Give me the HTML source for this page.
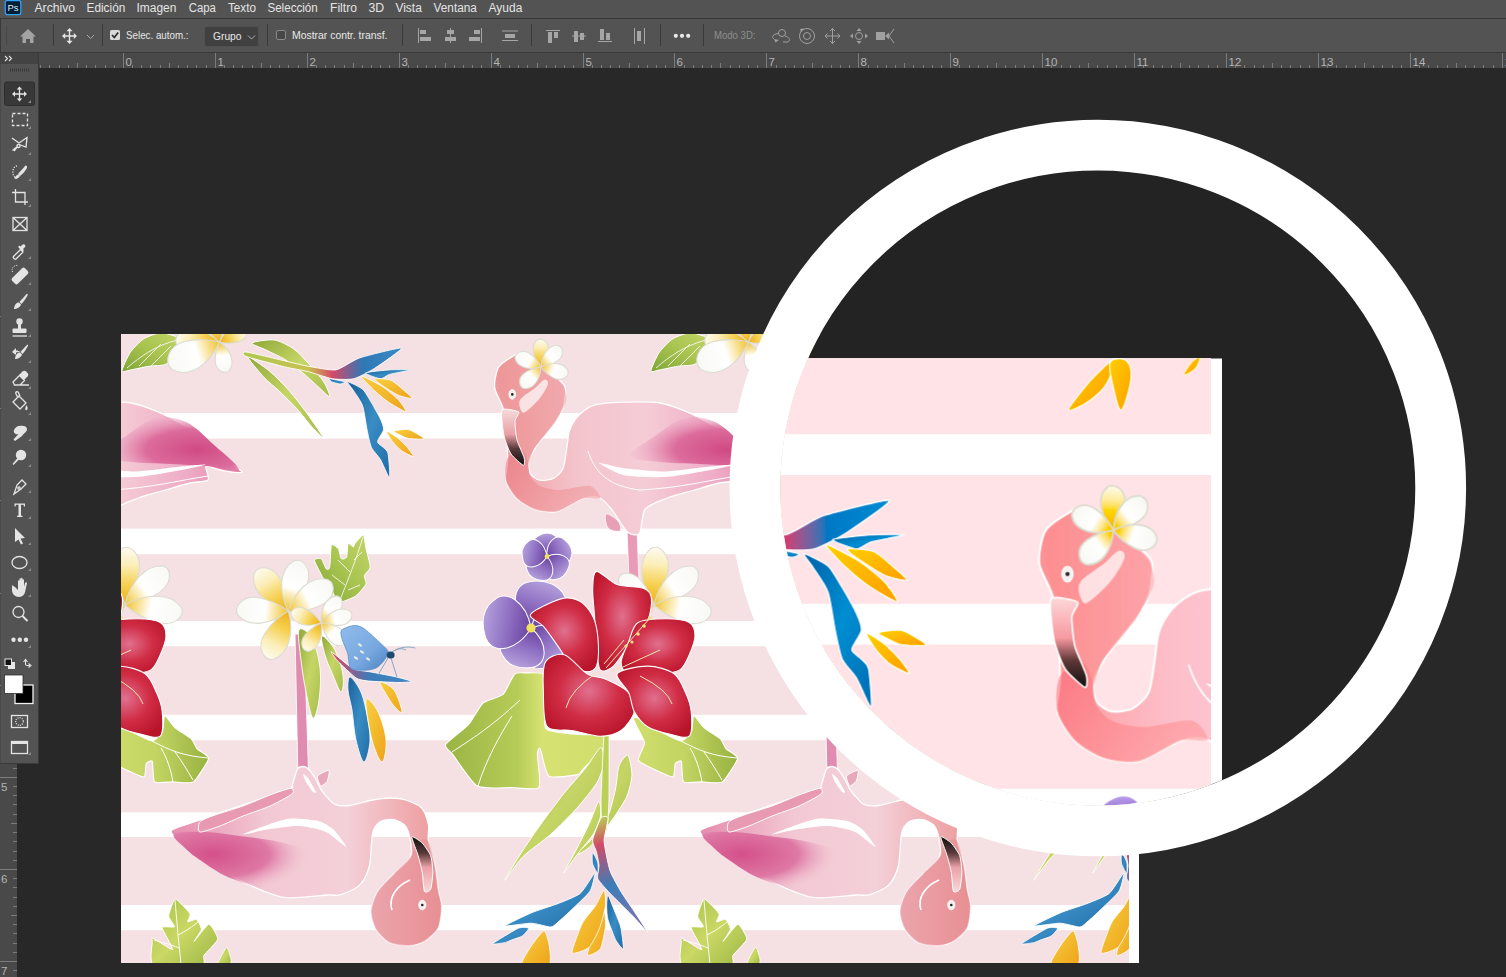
<!DOCTYPE html>
<html><head><meta charset="utf-8">
<style>
*{margin:0;padding:0;box-sizing:border-box}
html,body{width:1506px;height:977px;overflow:hidden;background:#282828;font-family:"Liberation Sans",sans-serif}
.a{position:absolute}
#menu{left:0;top:0;width:1506px;height:18px;background:#535353}
#menu span{position:absolute;top:2px;font-size:12px;color:#e4e4e4;line-height:12px;white-space:nowrap}
#ml{left:0;top:18px;width:1506px;height:1px;background:#383838}
#opt{left:0;top:19px;width:1506px;height:33px;background:#535353}
#ol{left:0;top:52px;width:1506px;height:1px;background:#383838}
#ruler{left:39px;top:53px;width:1467px;height:15px;background:#494949}
#vrul{left:0;top:53px;width:17px;height:924px;background:#494949}
#tools{left:1px;top:64px;width:37px;height:699px;background:#535353}
</style></head><body>
<div id="menu" class="a">
  <svg class="a" style="left:4px;top:0" width="18" height="16" viewBox="0 0 18 16"><rect x="1.2" y="0.6" width="15.6" height="14" rx="2" fill="#001e36" stroke="#31a8ff" stroke-width="1.2"/><text x="3.4" y="11.4" font-family="Liberation Sans" font-size="9.5" fill="#d6ecfc">Ps</text></svg>
  <svg class="a" style="left:0;top:0" width="560" height="18"><g font-family="Liberation Sans" font-size="12" fill="#e4e4e4"><text x="34.5" y="12.2" textLength="40.599999999999994" lengthAdjust="spacingAndGlyphs">Archivo</text><text x="86.5" y="12.2" textLength="38.8" lengthAdjust="spacingAndGlyphs">Edición</text><text x="136.5" y="12.2" textLength="39.8" lengthAdjust="spacingAndGlyphs">Imagen</text><text x="188.8" y="12.2" textLength="27.1" lengthAdjust="spacingAndGlyphs">Capa</text><text x="228.0" y="12.2" textLength="28.0" lengthAdjust="spacingAndGlyphs">Texto</text><text x="267.4" y="12.2" textLength="50.4" lengthAdjust="spacingAndGlyphs">Selección</text><text x="330.0" y="12.2" textLength="26.900000000000002" lengthAdjust="spacingAndGlyphs">Filtro</text><text x="368.5" y="12.2" textLength="15.700000000000001" lengthAdjust="spacingAndGlyphs">3D</text><text x="395.4" y="12.2" textLength="26.5" lengthAdjust="spacingAndGlyphs">Vista</text><text x="433.6" y="12.2" textLength="43.199999999999996" lengthAdjust="spacingAndGlyphs">Ventana</text><text x="488.6" y="12.2" textLength="33.699999999999996" lengthAdjust="spacingAndGlyphs">Ayuda</text></g></svg>
</div>
<div id="ml" class="a"></div>
<div id="opt" class="a"></div>
<div id="ol" class="a"></div>
<div class="a" style="left:0;top:19px;width:1px;height:33px;background:#3a3a3a"></div>
<!-- options bar content -->
<svg class="a" style="left:0;top:19px" width="960" height="33" viewBox="0 19 960 33">
  <g fill="#3c3c3c">
    <rect x="6" y="26" width="1" height="1.2"/><rect x="6" y="28" width="1" height="1.2"/><rect x="6" y="30" width="1" height="1.2"/><rect x="6" y="32" width="1" height="1.2"/><rect x="6" y="34" width="1" height="1.2"/><rect x="6" y="36" width="1" height="1.2"/><rect x="6" y="38" width="1" height="1.2"/><rect x="6" y="40" width="1" height="1.2"/><rect x="6" y="42" width="1" height="1.2"/><rect x="6" y="44" width="1" height="1.2"/>
  </g>
  <path d="M28 29 L36 36.5 H33.5 V43 H30 V39 H26 V43 H22.5 V36.5 H20 Z" fill="#a3a3a3"/>
  <g fill="#3a3a3a">
    <rect x="53" y="24" width="1" height="22"/>
    <rect x="102" y="24" width="1" height="22"/>
    <rect x="267" y="24" width="1" height="22"/>
    <rect x="402" y="24" width="1" height="22"/>
    <rect x="531" y="24" width="1" height="22"/>
    <rect x="660" y="24" width="1" height="22"/>
    <rect x="703" y="24" width="1" height="22"/>
  </g>
  <!-- move icon -->
  <g fill="none" stroke="#e6e6e6" stroke-width="1.4">
    <path d="M69.5 29.5V42.5M63 36H76"/>
  </g>
  <g fill="#e6e6e6">
    <path d="M69.5 28 L72.5 31.2 H66.5Z M69.5 44 L72.5 40.8 H66.5Z M62 36 L65.2 33 V39Z M77 36 L73.8 33 V39Z"/>
  </g>
  <path d="M87 35 L90.5 38.5 L94 35" fill="none" stroke="#a8a8a8" stroke-width="1"/>
  <!-- checkbox checked -->
  <rect x="110" y="30" width="10" height="10" rx="1.5" fill="#d9d9d9"/>
  <path d="M112 35 L114.3 37.5 L118.2 32.5" fill="none" stroke="#2a2a2a" stroke-width="1.7"/>
  <text x="126" y="39.3" font-family="Liberation Sans" font-size="10.2" fill="#e8e8e8" textLength="62.5" lengthAdjust="spacingAndGlyphs">Selec. autom.:</text>
  <rect x="204.5" y="26.5" width="54" height="20" rx="2.5" fill="#404040" stroke="#505050"/>
  <text x="213" y="39.8" font-family="Liberation Sans" font-size="10.5" fill="#e8e8e8" textLength="28.5" lengthAdjust="spacingAndGlyphs">Grupo</text>
  <path d="M248 35.5 L251.5 39 L255 35.5" fill="none" stroke="#b0b0b0" stroke-width="1"/>
  <!-- unchecked -->
  <rect x="276.5" y="30.5" width="9" height="9" rx="1.5" fill="#474747" stroke="#8a8a8a" stroke-width="1"/>
  <text x="292" y="39.3" font-family="Liberation Sans" font-size="10.2" fill="#e8e8e8" textLength="95.5" lengthAdjust="spacingAndGlyphs">Mostrar contr. transf.</text>
  <!-- align icons -->
  <g fill="#a6a6a6">
    <rect x="418" y="28" width="1" height="15"/><rect x="420" y="30" width="6" height="4"/><rect x="420" y="37" width="11" height="4"/>
    <rect x="450" y="28" width="1" height="15"/><rect x="447" y="30" width="7" height="4"/><rect x="445" y="37" width="11" height="4"/>
    <rect x="481" y="28" width="1" height="15"/><rect x="474" y="30" width="6" height="4"/><rect x="469" y="37" width="11" height="4"/>
    <rect x="502" y="30.5" width="16" height="1"/><rect x="505" y="34" width="10" height="4"/><rect x="502" y="40" width="16" height="1"/>
    <rect x="546" y="30" width="14" height="1"/><rect x="548" y="32" width="4" height="11"/><rect x="554" y="32" width="4" height="6"/>
    <rect x="572" y="35.5" width="14" height="1"/><rect x="574" y="31" width="4" height="11"/><rect x="580" y="33" width="4" height="7"/>
    <rect x="598" y="41" width="14" height="1"/><rect x="600" y="29" width="4" height="11"/><rect x="606" y="33" width="4" height="7"/>
    <rect x="634" y="28" width="1" height="16"/><rect x="637" y="31" width="4" height="10"/><rect x="644" y="28" width="1" height="16"/>
  </g>
  <g fill="#e8e8e8"><circle cx="675.8" cy="35.8" r="2.1"/><circle cx="682" cy="35.8" r="2.1"/><circle cx="688.2" cy="35.8" r="2.1"/></g>
  <text x="714" y="39.3" font-family="Liberation Sans" font-size="10.2" fill="#8e8e8e" textLength="41.5" lengthAdjust="spacingAndGlyphs">Modo 3D:</text>
  <g fill="none" stroke="#a0a0a0" stroke-width="1">
    <circle cx="782" cy="33" r="3.5"/>
    <path d="M778.5 33.5 C773 34 771 37 774 39 M785 36 C789 37 791 40 788 42 H783"/>
    <circle cx="807" cy="36" r="7.5"/><circle cx="807" cy="36" r="3.5"/>
    <path d="M832.5 28.5 V43.5 M825 36 H840 M830 31 L832.5 28.5 L835 31 M830 41 L832.5 43.5 L835 41 M827.5 33.5 L825 36 L827.5 38.5 M837.5 33.5 L840 36 L837.5 38.5"/>
    <circle cx="859" cy="36" r="3.5"/>
  </g>
  <g fill="#a0a0a0">
    <path d="M774 39 L779 40 L775.5 42.5Z M800 29 L804 28.5 L801 32Z"/>
    <path d="M859 28 L861.5 31 H856.5Z M859 44 L861.5 41 H856.5Z M850 36 L853 33.5 V38.5Z M868 36 L865 33.5 V38.5Z"/>
    <rect x="876" y="32" width="9" height="8"/><path d="M885 36 L889 32.5 V39.5Z"/>
  </g>
  <path d="M894 29 L889 36 L894 43" fill="none" stroke="#a0a0a0" stroke-width="1"/>
</svg>
<div id="ruler" class="a"></div>
<div id="vrul" class="a"></div>
<svg class="a" style="left:39px;top:53px" width="1467" height="15"><path d="M1.5 12V15M10.5 12V15M20.5 12V15M29.5 12V15M38.5 10V15M47.5 12V15M56.5 12V15M66.5 12V15M75.5 12V15M84.5 0V15M93.5 12V15M102.5 12V15M111.5 12V15M121.5 12V15M130.5 10V15M139.5 12V15M148.5 12V15M157.5 12V15M167.5 12V15M176.5 0V15M185.5 12V15M194.5 12V15M203.5 12V15M213.5 12V15M222.5 10V15M231.5 12V15M240.5 12V15M249.5 12V15M259.5 12V15M268.5 0V15M277.5 12V15M286.5 12V15M295.5 12V15M305.5 12V15M314.5 10V15M323.5 12V15M332.5 12V15M341.5 12V15M350.5 12V15M360.5 0V15M369.5 12V15M378.5 12V15M387.5 12V15M396.5 12V15M406.5 10V15M415.5 12V15M424.5 12V15M433.5 12V15M442.5 12V15M452.5 0V15M461.5 12V15M470.5 12V15M479.5 12V15M488.5 12V15M498.5 10V15M507.5 12V15M516.5 12V15M525.5 12V15M534.5 12V15M544.5 0V15M553.5 12V15M562.5 12V15M571.5 12V15M580.5 12V15M590.5 10V15M599.5 12V15M608.5 12V15M617.5 12V15M626.5 12V15M635.5 0V15M645.5 12V15M654.5 12V15M663.5 12V15M672.5 12V15M681.5 10V15M691.5 12V15M700.5 12V15M709.5 12V15M718.5 12V15M727.5 0V15M737.5 12V15M746.5 12V15M755.5 12V15M764.5 12V15M773.5 10V15M783.5 12V15M792.5 12V15M801.5 12V15M810.5 12V15M819.5 0V15M829.5 12V15M838.5 12V15M847.5 12V15M856.5 12V15M865.5 10V15M874.5 12V15M884.5 12V15M893.5 12V15M902.5 12V15M911.5 0V15M920.5 12V15M930.5 12V15M939.5 12V15M948.5 12V15M957.5 10V15M966.5 12V15M976.5 12V15M985.5 12V15M994.5 12V15M1003.5 0V15M1012.5 12V15M1022.5 12V15M1031.5 12V15M1040.5 12V15M1049.5 10V15M1058.5 12V15M1068.5 12V15M1077.5 12V15M1086.5 12V15M1095.5 0V15M1104.5 12V15M1114.5 12V15M1123.5 12V15M1132.5 12V15M1141.5 10V15M1150.5 12V15M1159.5 12V15M1169.5 12V15M1178.5 12V15M1187.5 0V15M1196.5 12V15M1205.5 12V15M1215.5 12V15M1224.5 12V15M1233.5 10V15M1242.5 12V15M1251.5 12V15M1261.5 12V15M1270.5 12V15M1279.5 0V15M1288.5 12V15M1297.5 12V15M1307.5 12V15M1316.5 12V15M1325.5 10V15M1334.5 12V15M1343.5 12V15M1353.5 12V15M1362.5 12V15M1371.5 0V15M1380.5 12V15M1389.5 12V15M1398.5 12V15M1408.5 12V15M1417.5 10V15M1426.5 12V15M1435.5 12V15M1444.5 12V15M1454.5 12V15M1463.5 0V15" stroke="#7c7c7c" stroke-width="1" fill="none"/><g font-family="Liberation Sans" font-size="11.5" fill="#b4b4b4"><text x="86.5" y="12.6">0</text><text x="178.5" y="12.6">1</text><text x="270.5" y="12.6">2</text><text x="362.5" y="12.6">3</text><text x="454.5" y="12.6">4</text><text x="546.5" y="12.6">5</text><text x="637.5" y="12.6">6</text><text x="729.5" y="12.6">7</text><text x="821.5" y="12.6">8</text><text x="913.5" y="12.6">9</text><text x="1005.5" y="12.6">10</text><text x="1097.5" y="12.6">11</text><text x="1189.5" y="12.6">12</text><text x="1281.5" y="12.6">13</text><text x="1373.5" y="12.6">14</text><text x="1465.5" y="12.6">15</text></g></svg>
<svg class="a" style="left:0;top:53px" width="17" height="924"><path d="M0 263.5H17M13 272.5H17M13 281.5H17M13 291.5H17M13 300.5H17M11 309.5H17M13 318.5H17M13 328.5H17M13 337.5H17M13 346.5H17M0 355.5H17M13 364.5H17M13 374.5H17M13 383.5H17M13 392.5H17M11 401.5H17M13 410.5H17M13 420.5H17M13 429.5H17M13 438.5H17M0 447.5H17M13 457.5H17M13 466.5H17M13 475.5H17M13 484.5H17M11 493.5H17M13 503.5H17M13 512.5H17M13 521.5H17M13 530.5H17M0 540.5H17M13 549.5H17M13 558.5H17M13 567.5H17M13 576.5H17M11 586.5H17M13 595.5H17M13 604.5H17M13 613.5H17M13 622.5H17M0 632.5H17M13 641.5H17M13 650.5H17M13 659.5H17M13 669.5H17M11 678.5H17M13 687.5H17M13 696.5H17M13 705.5H17M13 715.5H17M0 724.5H17M13 733.5H17M13 742.5H17M13 751.5H17M13 761.5H17M11 770.5H17M13 779.5H17M13 788.5H17M13 798.5H17M13 807.5H17M0 816.5H17M13 825.5H17M13 834.5H17M13 844.5H17M13 853.5H17M11 862.5H17M13 871.5H17M13 880.5H17M13 890.5H17M13 899.5H17M0 908.5H17M13 917.5H17" stroke="#7c7c7c" stroke-width="1" fill="none"/><g font-family="Liberation Sans" font-size="11.5" fill="#b4b4b4"><text x="1" y="276.5">0</text><text x="1" y="368.5">1</text><text x="1" y="460.5">2</text><text x="1" y="553.5">3</text><text x="1" y="645.5">4</text><text x="1" y="737.5">5</text><text x="1" y="829.5">6</text><text x="1" y="921.5">7</text></g></svg>
<div id="tools" class="a"></div>
<svg class="a" style="left:0;top:53px" width="40" height="712" viewBox="0 53 40 712">
  <rect x="0" y="53" width="38" height="11" fill="#434343"/>
  <path d="M5 56 L7.5 58.5 L5 61 M9 56 L11.5 58.5 L9 61" fill="none" stroke="#e0e0e0" stroke-width="1.1"/>
  <rect x="38" y="53" width="1" height="16" fill="#3a3a3a"/>
  <g fill="#3a3a3a"><rect x="10" y="68.5" width="1" height="3"/><rect x="12" y="68.5" width="1" height="3"/><rect x="14" y="68.5" width="1" height="3"/><rect x="16" y="68.5" width="1" height="3"/><rect x="18" y="68.5" width="1" height="3"/><rect x="20" y="68.5" width="1" height="3"/><rect x="22" y="68.5" width="1" height="3"/><rect x="24" y="68.5" width="1" height="3"/><rect x="26" y="68.5" width="1" height="3"/><rect x="28" y="68.5" width="1" height="3"/></g>
  <rect x="4.5" y="82" width="30" height="23.5" rx="2" fill="#383838" stroke="#2e2e2e"/>
  <g fill="#8a8a8a"><path d="M31 100 V103 H28Z M31 126 V129 H28Z M31 152 V155 H28Z M31 178 V181 H28Z M31 204 V207 H28Z M31 256 V259 H28Z M31 282 V285 H28Z M31 308 V311 H28Z M31 334 V337 H28Z M31 360 V363 H28Z M31 386 V389 H28Z M31 412 V415 H28Z M31 438 V441 H28Z M31 464 V467 H28Z M31 490 V493 H28Z M31 516 V519 H28Z M31 542 V545 H28Z M31 568 V571 H28Z M31 594 V597 H28Z M31 645 V648 H28Z M31 752 V755 H28Z"/></g>
  <g fill="none" stroke="#e4e4e4" stroke-width="1.3">
    <!-- move -->
    <path d="M19.5 88 V100 M13.5 94 H25.5"/>
    <!-- marquee -->
    <rect x="12.5" y="113.5" width="15" height="12" stroke-dasharray="3 2"/>
    <!-- lasso -->
    <path d="M12 138 L19 143 L27 137.5 L26 147 L19 144.5 M18 146 L14 151 M16 147.5 L12.5 150.5"/>
    <circle cx="18.5" cy="146" r="1.6"/>
    <!-- quick select -->
    <path d="M17 166 C12 166 11 177 17 178" stroke-dasharray="1.2 1.3"/>
    <!-- crop -->
    <path d="M15.5 189 V202 H28 M12 192.5 H25 V205"/>
    <!-- frame -->
    <rect x="13" y="217.5" width="14" height="13"/><path d="M13 217.5 L27 230.5 M27 217.5 L13 230.5"/>
    <!-- eyedropper -->
    <path d="M13.5 256.5 L20.5 249.5 L23 252 L16 259 C15 260 12.5 257.5 13.5 256.5Z"/>
    <path d="M12.5 272 C11 268 14 265 17.5 265.5" stroke-dasharray="1 1.2" stroke-width="1"/>
    <!-- stamp -->
    <path d="M12.5 336 H27"/>
    <!-- eraser -->
    <path d="M13 382 L19.5 375.5 L24.5 380.5 L20 385 H14.5Z M20 385 H29"/>
    <!-- bucket -->
    <path d="M13 402 L19 396 L26 403 L20 409Z M20 396 L18 392 C17 391 15 392 16 394 L18 398"/>
    <!-- pen -->
    <path d="M14 494 L17 485 L22 480 L26 484 L21 489 Z"/>
    <circle cx="19" cy="488" r="1.2"/>
    <!-- path select -->
    <!-- ellipse -->
    <ellipse cx="19.5" cy="562.5" rx="7.5" ry="6"/>
    <!-- zoom -->
    <circle cx="18.5" cy="612" r="5.5"/><path d="M22.5 616 L27.5 621" stroke-width="2"/>
    <!-- quick mask -->
    <rect x="11.5" y="715.5" width="16" height="12"/>
    <circle cx="19.5" cy="721.5" r="3.8" stroke-dasharray="1 1.2"/>
    <!-- screen mode -->
    <rect x="11.5" y="741.5" width="16" height="12"/>
  </g>
  <g fill="#e4e4e4">
    <path d="M19.5 86.5 L22.3 89.5 H16.7Z M19.5 101.5 L22.3 98.5 H16.7Z M12 94 L15 91.2 V96.8Z M27 94 L24 91.2 V96.8Z"/>
    <path d="M25 166 C23 169 20 171 18 174 L20 176 C23 174 25 171 27 168 C27.5 166 26 165 25 166Z M18 174.5 C16 175 15 177 14.5 179 C17 179 19 178 20 176Z"/>
    <path d="M19.5 248.5 L22.5 251.5 L24 250 L23 249 L24.8 247.2 C26.5 245.5 24 243 22.3 244.7 L20.5 246.5 L19.5 245.5 L18 247Z"/>
    <g transform="rotate(-45 20 276)"><rect x="11" y="272" width="18" height="8" rx="2"/></g>
    <path d="M26.5 294 C24 297 21 300 19.5 302 L21.5 304 C23.5 302 25.5 299 27.5 295.5 C28 294 27 293.5 26.5 294Z M19 302.5 C16 302.5 14.5 305 14 309 C17 309 20.5 307 21 304.5Z"/>
    <circle cx="19.5" cy="321.5" r="3.2"/><rect x="18" y="324" width="3" height="5"/><rect x="12.5" y="328.5" width="14" height="4.5" rx="1"/>
    <path d="M27 345 C24 348 22 350 20.5 352 L22.5 354 C24.5 352 26 349 28 346 C28.5 345 27.5 344.5 27 345Z M20 352.5 C17 352.5 15.5 355 15 359 C18 359 21.5 357 22 354.5Z M12 352 L16 348 V350.5 C18 350.5 19 351 20 352 C18 351.7 17 352 16 352.5 V355Z"/>
    <path d="M19 375 L22.5 371.5 C23.5 370.5 25 370.5 26 371.5 L27.5 373 C28.5 374 28.5 375.5 27.5 376.5 L24 380Z"/>
    <path d="M26 405 C26 407 24.5 409 25.5 410 C27 411 28 409 27.5 407Z"/>
    <path d="M19 426 C23 425 27 426 27 429 C27 432 24 433 22 436 L15 441 L13.5 439.5 L18.5 434 C16 435 13 433 14 430 C15 428 17 426 19 426Z"/>
    <circle cx="21" cy="455" r="5.2"/><path d="M17.5 458 L12.5 464 L13.5 465 L19 459.5Z"/>
    <path d="M14.5 503.5 H25 V506.5 H24 L23.5 504.8 H21 V515.5 L22.5 516 V517 H17 V516 L18.5 515.5 V504.8 H16 L15.5 506.5 H14.5Z"/>
    <path d="M15 528 L25 538 L20.5 538.5 L23 543.5 L21 544.5 L18.5 539.5 L15 542Z"/>
    <path d="M13 585 V590 C13 594 16 597 20 597 C24 597 26 594 26.5 590 L28 583 C28 582 26.5 582 26 583 L25 587 V580 C25 579 23.5 579 23.5 580 V586 V578.5 C23.5 577.5 22 577.5 22 578.5 V586 V579 C22 578 20.5 578 20.5 579 V586.5 V581 C20.5 580 19 580 19 581 V590 L16 587 C15 586 13.5 586 13 585Z" transform="translate(-1 -0)"/>
    <circle cx="13.5" cy="639.8" r="2.2"/><circle cx="19.8" cy="639.8" r="2.2"/><circle cx="26" cy="639.8" r="2.2"/>
    <rect x="11.5" y="741.5" width="16" height="2.5"/>
  </g>
  <!-- default colors -->
  <rect x="8" y="662" width="7" height="7" fill="#e8e8e8"/>
  <rect x="5" y="659" width="6.5" height="6.5" fill="#111" stroke="#e8e8e8" stroke-width="1"/>
  <path d="M23.5 662 L25.5 659.5 L27.5 662 M25.5 660 V664 C25.5 665 26 665.5 27 665.5 H30 M28.5 663.5 L31 665.5 L28.5 667.5" fill="none" stroke="#e4e4e4" stroke-width="1.1"/>
  <!-- colors -->
  <rect x="15" y="685" width="18" height="18.5" fill="#000" stroke="#f0f0f0" stroke-width="1.3"/>
  <rect x="4.5" y="675" width="18.5" height="18.5" fill="#ffffff" stroke="#2e2e2e" stroke-width="0.8"/>
  <rect x="38" y="64" width="1" height="700" fill="#3a3a3a"/>
  <rect x="0" y="763" width="39" height="1" fill="#3a3a3a"/>
</svg>
<svg class="a" style="left:0;top:0" width="1506" height="977" viewBox="0 0 1506 977">
<defs>

<linearGradient id="gLeaf" x1="0" y1="0" x2="1" y2="1"><stop offset="0" stop-color="#8fa838"/><stop offset="0.5" stop-color="#c6d666"/><stop offset="1" stop-color="#a4bc48"/></linearGradient>
<linearGradient id="gMon" x1="0" y1="0" x2="0" y2="1"><stop offset="0" stop-color="#a6bf4c"/><stop offset="1" stop-color="#d4e06e"/></linearGradient>
<linearGradient id="gMonH" x1="0" y1="0" x2="1" y2="0"><stop offset="0" stop-color="#9ab443"/><stop offset="0.45" stop-color="#b6cc58"/><stop offset="0.6" stop-color="#d6e272"/><stop offset="1" stop-color="#d0de6c"/></linearGradient>
<linearGradient id="gMonH2" x1="0" y1="0" x2="1" y2="0"><stop offset="0" stop-color="#d0de6c"/><stop offset="0.5" stop-color="#c2d462"/><stop offset="1" stop-color="#98b240"/></linearGradient>
<linearGradient id="gLeafD" x1="0" y1="1" x2="1" y2="0"><stop offset="0" stop-color="#7fa436"/><stop offset="0.5" stop-color="#a8c450"/><stop offset="1" stop-color="#c4d66a"/></linearGradient>
<linearGradient id="gMonB" x1="0" y1="0" x2="1" y2="1"><stop offset="0" stop-color="#a8c24a"/><stop offset="0.5" stop-color="#cad864"/><stop offset="1" stop-color="#9cb644"/></linearGradient>
<linearGradient id="gBlue" x1="0" y1="0" x2="1" y2="1"><stop offset="0" stop-color="#18609a"/><stop offset="0.5" stop-color="#3a8cc4"/><stop offset="1" stop-color="#1f6ca6"/></linearGradient>
<linearGradient id="gOr" x1="0" y1="0" x2="1" y2="1"><stop offset="0" stop-color="#f8d040"/><stop offset="1" stop-color="#eea21a"/></linearGradient>
<linearGradient id="gPet" x1="0" y1="0" x2="1" y2="0"><stop offset="0" stop-color="#eeb018"/><stop offset="0.35" stop-color="#f6d050"/><stop offset="0.7" stop-color="#fbeeb8"/><stop offset="1" stop-color="#fdfbf0"/></linearGradient>
<linearGradient id="gPetW" x1="0" y1="0" x2="1" y2="0"><stop offset="0" stop-color="#f0c030"/><stop offset="0.22" stop-color="#f8e090"/><stop offset="0.45" stop-color="#ffffff"/><stop offset="1" stop-color="#f8f8f4"/></linearGradient>
<linearGradient id="gHib" x1="0" y1="0" x2="1" y2="1"><stop offset="0" stop-color="#d63450"/><stop offset="0.5" stop-color="#e0607e"/><stop offset="1" stop-color="#c41c32"/></linearGradient>
<radialGradient id="gHib2" cx="0.5" cy="0.45" r="0.6"><stop offset="0" stop-color="#e0708e"/><stop offset="0.55" stop-color="#d02c44"/><stop offset="1" stop-color="#b8142a"/></radialGradient>
<linearGradient id="gVio" x1="0" y1="0" x2="1" y2="0"><stop offset="0" stop-color="#6a44a0"/><stop offset="0.45" stop-color="#8c6cc0"/><stop offset="1" stop-color="#b4a0dc"/></linearGradient>
<linearGradient id="gBut" x1="0" y1="0" x2="1" y2="1"><stop offset="0" stop-color="#90bceb"/><stop offset="0.6" stop-color="#78a8e0"/><stop offset="1" stop-color="#4a82c2"/></linearGradient>
<linearGradient id="gBeak" x1="0" y1="0" x2="0" y2="1"><stop offset="0" stop-color="#f6dada"/><stop offset="0.45" stop-color="#eaa0a6"/><stop offset="0.7" stop-color="#5a3a3a"/><stop offset="1" stop-color="#111"/></linearGradient>
<linearGradient id="gBeak2" x1="0" y1="1" x2="0" y2="0"><stop offset="0" stop-color="#f6dada"/><stop offset="0.45" stop-color="#eaa0a6"/><stop offset="0.7" stop-color="#5a3a3a"/><stop offset="1" stop-color="#111"/></linearGradient>
<linearGradient id="gBody1" gradientUnits="userSpaceOnUse" x1="495" y1="0" x2="771" y2="0"><stop offset="0" stop-color="#ee9a9c"/><stop offset="0.3" stop-color="#f4c4cc"/><stop offset="0.55" stop-color="#f5ccd6"/><stop offset="0.8" stop-color="#eeacc6"/><stop offset="1" stop-color="#e282a8"/></linearGradient>
<linearGradient id="gNeck" x1="0" y1="0" x2="1" y2="1"><stop offset="0" stop-color="#e8707a"/><stop offset="1" stop-color="#f2a8a8"/></linearGradient>
<radialGradient id="gWing" cx="0.7" cy="0.6" r="0.75"><stop offset="0" stop-color="#d04a84"/><stop offset="0.5" stop-color="#dc6c9c"/><stop offset="1" stop-color="#eeb0c8" stop-opacity="0"/></radialGradient>
<linearGradient id="gBody2" gradientUnits="userSpaceOnUse" x1="171" y1="0" x2="441" y2="0"><stop offset="0" stop-color="#e68cae"/><stop offset="0.35" stop-color="#f2c8d4"/><stop offset="0.65" stop-color="#f4d0d8"/><stop offset="0.85" stop-color="#f0b0b4"/><stop offset="1" stop-color="#ec9898"/></linearGradient>
<radialGradient id="gWing2" cx="0.3" cy="0.4" r="0.7"><stop offset="0" stop-color="#d4508a"/><stop offset="0.6" stop-color="#de78a4"/><stop offset="1" stop-color="#f0b8cc" stop-opacity="0"/></radialGradient>
<linearGradient id="gStT" gradientUnits="userSpaceOnUse" x1="246" y1="352" x2="402" y2="348"><stop offset="0" stop-color="#b0c850"/><stop offset="0.4" stop-color="#c8c050"/><stop offset="0.55" stop-color="#d64868"/><stop offset="0.75" stop-color="#2e78b6"/><stop offset="1" stop-color="#3a8ac4"/></linearGradient>
<linearGradient id="gStL" gradientUnits="userSpaceOnUse" x1="300" y1="640" x2="424" y2="684"><stop offset="0" stop-color="#b0c850"/><stop offset="0.3" stop-color="#d64868"/><stop offset="0.6" stop-color="#3a7cb8"/><stop offset="1" stop-color="#4a8ac8"/></linearGradient>
<linearGradient id="gStB" gradientUnits="userSpaceOnUse" x1="600" y1="800" x2="648" y2="932"><stop offset="0.12" stop-color="#b8cc55"/><stop offset="0.3" stop-color="#d24a68"/><stop offset="0.6" stop-color="#3a7db8"/><stop offset="1" stop-color="#9070b0"/></linearGradient>

<clipPath id="cv"><rect x="121" y="334" width="1008" height="629"/></clipPath>
<clipPath id="inner"><circle cx="1097.8" cy="488" r="317.5"/></clipPath>
<clipPath id="insclip"><rect x="333" y="259.4" width="269" height="400"/></clipPath>
<g id="P"><path d="M627.0,530.0 L637.0,530.0 L639.0,580.0 L629.0,580.0Z" fill="#e89ab6" stroke="#ffffff" stroke-width="0.8" />
<path d="M252.0,343.0 C253.0,341.6 268.8,339.2 274.4,340.0 C280.0,340.8 289.2,345.8 293.8,349.0 C298.4,352.2 304.8,359.5 308.8,363.9 C312.8,368.3 320.9,377.4 323.7,381.8 C326.5,386.2 330.5,396.2 329.7,396.8 C328.9,397.4 321.3,389.5 317.7,386.3 C314.1,383.1 307.2,376.5 302.8,372.9 C298.4,369.3 289.6,362.4 284.8,359.4 C280.0,356.4 271.3,352.6 266.9,350.4 C262.5,348.2 251.0,344.4 252.0,343.0Z" fill="url(#gLeaf)" stroke="#ffffff" stroke-width="1.0" />
<path d="M247.5,356.4 C248.3,355.6 264.3,366.8 269.9,371.4 C275.5,376.0 284.5,385.4 289.3,390.8 C294.1,396.2 301.8,406.3 305.8,411.7 C309.8,417.1 316.8,427.6 319.2,431.2 C321.6,434.8 324.7,439.2 323.7,438.6 C322.7,438.0 315.3,430.7 311.7,426.7 C308.1,422.7 301.2,413.5 296.8,408.7 C292.4,403.9 283.3,395.0 278.9,390.8 C274.5,386.6 268.1,381.9 263.9,377.3 C259.7,372.7 246.7,357.2 247.5,356.4Z" fill="url(#gLeaf)" stroke="#ffffff" stroke-width="1.0" />
<path d="M329.7,378.8 C331.0,378.8 343.6,381.3 344.6,381.8 C345.6,382.3 341.3,384.0 340.0,384.0 C338.7,384.0 333.0,382.5 332.0,382.0 C331.0,381.5 328.4,378.8 329.7,378.8Z" fill="url(#gBlue)" stroke="#ffffff" stroke-width="0.8" />
<path d="M347.6,381.8 C348.7,381.6 359.8,386.9 362.6,389.3 C365.4,391.8 369.4,399.3 371.5,402.8 C373.6,406.3 379.1,416.1 380.5,419.2 C381.9,422.3 383.9,427.1 383.5,429.7 C383.1,432.3 377.5,439.5 377.5,441.6 C377.5,443.7 382.3,446.2 383.5,447.6 C384.7,449.0 387.3,450.1 388.0,453.6 C388.7,457.1 390.4,476.8 389.5,477.5 C388.6,478.2 382.6,463.1 380.5,459.6 C378.4,456.1 373.1,451.1 371.5,447.6 C369.9,444.1 368.1,434.6 367.1,429.7 C366.1,424.8 364.2,410.2 362.6,405.7 C361.0,401.2 355.4,393.6 353.6,390.8 C351.9,388.0 346.6,382.0 347.6,381.8Z" fill="url(#gBlue)" stroke="#ffffff" stroke-width="0.8" />
<path d="M246.0,352.0 C249.9,352.4 278.7,359.5 284.8,360.9 C290.9,362.3 302.2,365.2 307.3,366.1 C312.4,367.0 330.5,370.7 335.7,369.9 C340.9,369.1 353.0,360.1 359.6,357.9 C366.2,355.7 399.9,347.1 401.4,348.2 C402.9,349.2 379.3,365.3 374.5,368.4 C369.7,371.5 357.8,377.8 353.6,378.8 C349.4,379.8 337.3,379.5 332.7,378.8 C328.1,378.1 312.1,372.6 307.3,371.4 C302.5,370.2 290.9,368.4 284.8,366.9 C278.7,365.4 249.9,357.9 246.0,356.4 C242.1,354.9 242.1,351.6 246.0,352.0Z" fill="url(#gStT)" stroke="#ffffff" stroke-width="0.9" />
<path d="M365.6,372.9 C366.5,372.0 385.0,370.2 389.5,369.9 C394.0,369.6 410.4,369.4 410.4,369.9 C410.4,370.3 392.5,373.5 389.5,374.4 C386.5,375.3 382.9,378.9 380.5,378.8 C378.1,378.7 364.7,373.8 365.6,372.9Z" fill="url(#gBlue)" stroke="#ffffff" stroke-width="0.8" />
<path d="M374.5,378.8 C375.4,378.1 387.5,378.9 391.0,380.3 C394.5,381.7 402.0,388.7 404.4,390.8 C406.8,392.9 412.6,397.8 411.9,398.3 C411.2,398.8 401.7,396.7 398.4,395.3 C395.1,393.9 386.3,388.2 383.5,386.3 C380.7,384.4 373.6,379.5 374.5,378.8Z" fill="url(#gOr)" stroke="#ffffff" stroke-width="0.8" />
<path d="M361.1,375.9 C362.0,375.4 377.6,383.5 382.0,386.3 C386.4,389.1 395.6,396.8 398.4,399.8 C401.2,402.8 406.9,411.3 405.9,411.7 C404.9,412.1 393.2,405.2 389.5,402.8 C385.8,400.4 377.8,393.9 374.5,390.8 C371.2,387.7 360.2,376.4 361.1,375.9Z" fill="url(#gOr)" stroke="#ffffff" stroke-width="0.8" />
<path d="M394.0,431.2 C394.9,430.5 405.4,428.8 408.9,429.7 C412.4,430.6 423.9,437.6 423.9,438.6 C423.9,439.6 411.5,439.0 408.9,438.6 C406.3,438.2 403.1,436.5 401.4,435.6 C399.7,434.7 393.1,431.9 394.0,431.2Z" fill="url(#gOr)" stroke="#ffffff" stroke-width="0.8" />
<path d="M386.5,431.2 C387.2,430.8 396.0,436.7 398.4,438.6 C400.8,440.5 405.6,445.5 407.4,447.6 C409.1,449.7 414.1,456.2 413.4,456.6 C412.7,457.0 403.8,452.4 401.4,450.6 C399.0,448.9 394.2,443.9 392.5,441.6 C390.8,439.3 385.8,431.6 386.5,431.2Z" fill="url(#gOr)" stroke="#ffffff" stroke-width="0.8" />
<path d="M513.0,292.0 C512.3,290.8 518.8,283.0 522.0,279.0 C525.2,275.0 528.8,271.0 532.0,268.0 C535.2,265.0 540.2,259.8 541.0,261.0 C541.8,262.2 539.5,270.8 537.0,275.0 C534.5,279.2 530.0,283.2 526.0,286.0 C522.0,288.8 513.7,293.2 513.0,292.0Z" fill="url(#gOr)" stroke="#ffffff" stroke-width="0.8" />
<path d="M539.0,262.0 C540.3,259.2 546.8,259.3 549.0,261.0 C551.2,262.7 552.5,266.8 552.0,272.0 C551.5,277.2 547.8,291.0 546.0,292.0 C544.2,293.0 542.2,283.0 541.0,278.0 C539.8,273.0 537.7,264.8 539.0,262.0Z" fill="url(#gOr)" stroke="#ffffff" stroke-width="0.8" />
<path d="M585.0,270.0 C584.7,269.3 588.3,263.8 590.0,262.0 C591.7,260.2 594.7,258.3 595.0,259.0 C595.3,259.7 593.7,264.2 592.0,266.0 C590.3,267.8 585.3,270.7 585.0,270.0Z" fill="url(#gOr)" stroke="#ffffff" stroke-width="0.6" />
<path d="M650.9,371.0 C650.9,369.0 656.6,356.3 659.2,352.5 C661.8,348.7 669.3,340.9 673.1,338.6 C676.9,336.3 686.7,332.7 691.5,333.0 C696.3,333.3 713.1,338.7 714.6,341.4 C716.1,344.1 706.4,353.3 704.0,356.0 C701.6,358.7 697.4,363.3 694.3,364.5 C691.2,365.7 681.8,365.7 677.7,366.3 C673.6,366.9 662.3,369.5 659.2,370.0 C656.1,370.5 650.9,373.0 650.9,371.0Z" fill="url(#gLeafD)" stroke="#ffffff" stroke-width="1.0" />
<path d="M656,368 C670,356 684,346 706,340 M668,366 L690,344 M680,366 L700,346" stroke="#ffffff" stroke-width="0.8" fill="none"/>
<g transform="translate(748.5 342.0) rotate(-172.0)"><path d="M0,0 C13.2,-14.0 31.7,-19.6 42.2,-8.4 C46.6,-0.9 39.6,10.3 26.4,9.3 C15.4,8.4 5.3,3.7 0,0Z" fill="url(#gPet)" stroke="#dcdcd2" stroke-width="1.1"/></g><g transform="translate(748.5 342.0) rotate(161.0)"><path d="M0,0 C16.8,-17.9 40.3,-25.0 53.8,-10.7 C59.4,-1.2 50.4,13.1 33.6,11.9 C19.6,10.7 6.7,4.8 0,0Z" fill="url(#gPetW)" stroke="#dcdcd2" stroke-width="1.1"/></g><g transform="translate(748.5 342.0) rotate(83.0)"><path d="M0,0 C9.3,-9.9 22.3,-13.8 29.8,-5.9 C32.9,-0.7 27.9,7.2 18.6,6.6 C10.8,5.9 3.7,2.6 0,0Z" fill="url(#gPetW)" stroke="#dcdcd2" stroke-width="1.1"/></g><g transform="translate(748.5 342.0) rotate(-20.0)"><path d="M0,0 C9.0,-9.6 21.6,-13.4 28.8,-5.7 C31.8,-0.6 27.0,7.0 18.0,6.4 C10.5,5.7 3.6,2.6 0,0Z" fill="url(#gPet)" stroke="#dcdcd2" stroke-width="1.1"/></g><g transform="translate(748.5 342.0) rotate(-100.0)"><path d="M0,0 C9.0,-9.6 21.6,-13.4 28.8,-5.7 C31.8,-0.6 27.0,7.0 18.0,6.4 C10.5,5.7 3.6,2.6 0,0Z" fill="url(#gPet)" stroke="#dcdcd2" stroke-width="1.1"/></g>
<path d="M512.3,356.6 C515.7,354.6 519.8,351.4 524.2,352.9 C528.6,354.4 539.7,363.7 545.0,368.0 C550.3,372.3 561.5,380.8 564.2,384.9 C566.9,389.0 565.1,395.3 564.9,398.4 C564.7,401.5 564.2,405.2 563.0,408.3 C561.8,411.4 557.9,418.4 555.6,421.8 C553.3,425.2 548.6,430.5 545.8,434.1 C543.0,437.7 537.0,444.9 534.7,448.8 C532.4,452.7 529.1,460.2 528.6,463.6 C528.1,467.0 529.5,472.4 531.0,474.6 C532.5,476.8 536.7,479.7 539.7,480.2 C542.7,480.7 550.1,479.9 553.2,478.3 C556.3,476.7 561.2,472.4 563.0,468.5 C564.8,464.6 565.9,453.7 566.7,448.8 C567.5,443.9 568.1,435.5 569.2,431.6 C570.3,427.7 573.3,422.1 575.3,419.3 C577.3,416.5 581.1,412.7 583.9,410.7 C586.7,408.7 590.5,405.7 596.2,404.6 C601.9,403.5 618.3,402.3 626.8,402.1 C635.3,401.9 652.1,401.8 660.0,403.0 C667.9,404.2 679.4,408.7 685.8,411.3 C692.2,413.9 702.1,419.1 707.9,422.4 C713.7,425.7 724.1,431.8 729.0,436.0 C733.9,440.2 739.4,449.2 745.0,454.0 C750.6,458.8 770.5,469.9 771.0,472.0 C771.5,474.1 753.8,470.8 749.0,470.0 C744.2,469.2 736.6,464.7 735.0,466.0 C733.4,467.3 739.1,477.7 737.0,480.0 C734.9,482.3 724.9,481.6 719.0,483.0 C713.1,484.4 699.9,488.5 693.0,490.5 C686.1,492.5 673.8,495.5 667.4,498.0 C661.0,500.5 649.0,504.3 645.3,509.0 C641.6,513.7 641.9,529.8 639.7,533.0 C637.5,536.2 631.3,534.5 628.7,533.0 C626.1,531.5 622.2,525.1 620.0,522.0 C617.8,518.9 614.7,513.2 612.0,510.0 C609.3,506.8 603.8,499.5 600.0,498.0 C596.2,496.5 588.9,496.7 583.2,498.5 C577.5,500.3 563.8,509.9 557.4,511.4 C551.0,512.9 540.7,511.3 535.3,509.6 C529.9,507.9 520.8,502.4 516.9,498.5 C513.0,494.6 507.0,485.5 505.8,480.1 C504.6,474.7 507.9,467.1 507.7,458.0 C507.5,448.9 505.7,421.2 504.0,411.9 C502.3,402.6 495.4,393.8 494.7,387.9 C494.0,382.0 496.1,371.8 498.4,367.6 C500.7,363.4 508.9,358.6 512.3,356.6Z" fill="url(#gBody1)" stroke="#ffffff" stroke-width="1.3" />
<path d="M630.0,456.0 C629.2,451.7 645.8,442.3 655.0,436.0 C664.2,429.7 675.0,420.3 685.0,418.0 C695.0,415.7 705.5,417.7 715.0,422.0 C724.5,426.3 733.2,436.0 742.0,444.0 C750.8,452.0 769.0,466.3 768.0,470.0 C767.0,473.7 747.3,467.0 736.0,466.0 C724.7,465.0 712.7,464.7 700.0,464.0 C687.3,463.3 671.7,463.3 660.0,462.0 C648.3,460.7 630.8,460.3 630.0,456.0Z" fill="url(#gWing)" stroke="none" stroke-width="0" />
<path d="M598.7,462.8 C598.7,463.6 615.6,473.3 623.2,475.0 C630.8,476.7 654.7,477.6 664.2,477.1 C673.7,476.6 696.7,472.5 705.0,471.0 C713.3,469.5 735.0,465.0 735.0,464.5 C735.0,464.0 713.3,466.2 705.0,467.0 C696.7,467.8 673.7,471.4 664.2,471.5 C654.7,471.6 630.8,469.0 623.2,468.0 C615.6,467.0 598.7,462.0 598.7,462.8Z" fill="#ffffff" stroke="none" stroke-width="0" />
<path d="M588,451 C594,470 606,486 640,490 C680,488 710,480 737,476" stroke="#ffffff" stroke-width="1" fill="none"/>
<path d="M606.0,514.0 C607.7,512.8 615.7,518.2 618.0,521.0 C620.3,523.8 621.7,529.8 620.0,531.0 C618.3,532.2 610.3,530.8 608.0,528.0 C605.7,525.2 604.3,515.2 606.0,514.0Z" fill="#e8a0b8" stroke="#ffffff" stroke-width="0.8" />
<path d="M507.7,458.0 C505.5,462.0 504.6,474.7 505.8,480.1 C507.0,485.5 513.0,494.6 516.9,498.5 C520.8,502.4 529.9,507.9 535.3,509.6 C540.7,511.3 551.0,512.9 557.4,511.4 C563.8,509.9 577.5,500.3 583.2,498.5 C588.9,496.7 599.1,499.7 600.0,498.0 C600.9,496.3 595.3,487.1 590.0,486.0 C584.7,484.9 566.7,490.0 560.0,490.0 C553.3,490.0 544.0,487.9 540.0,486.0 C536.0,484.1 531.6,479.2 530.0,476.0 C528.4,472.8 529.1,465.5 528.0,462.0 C526.9,458.5 524.7,450.5 522.0,450.0 C519.3,449.5 509.9,454.0 507.7,458.0Z" fill="url(#gNeck)" stroke="none" stroke-width="0" opacity="0.6"/>
<path d="M512.0,358.0 C515.5,355.9 519.6,352.5 524.0,354.0 C528.4,355.5 539.8,364.7 545.0,369.0 C550.2,373.3 560.2,381.7 563.0,386.0 C565.8,390.3 566.9,396.3 566.0,401.0 C565.1,405.7 558.7,416.6 556.0,421.0 C553.3,425.4 548.9,430.3 546.0,434.0 C543.1,437.7 536.4,445.0 534.0,449.0 C531.6,453.0 529.9,463.9 528.0,464.0 C526.1,464.1 522.4,455.9 520.0,450.0 C517.6,444.1 512.7,427.7 510.0,420.0 C507.3,412.3 501.6,398.7 500.0,392.0 C498.4,385.3 496.4,374.5 498.0,370.0 C499.6,365.5 508.5,360.1 512.0,358.0Z" fill="#ee9090" stroke="none" stroke-width="0" opacity="0.45"/>
<path d="M502.0,410.0 C503.5,407.6 517.4,410.9 518.7,412.0 C520.0,413.1 515.2,418.2 515.0,421.0 C514.8,423.8 516.0,435.8 516.9,439.5 C517.8,443.2 523.6,455.4 524.2,458.0 C524.8,460.6 524.6,465.7 523.3,465.3 C522.0,464.9 512.9,456.9 511.0,454.0 C509.1,451.1 504.9,440.4 504.0,436.0 C503.1,431.6 500.5,412.4 502.0,410.0Z" fill="url(#gBeak)" stroke="#ffffff" stroke-width="1.0" />
<path d="M520.0,400.0 C522.2,396.0 531.0,391.3 535.0,388.0 C539.0,384.7 541.8,380.7 544.0,380.0 C546.2,379.3 548.7,381.0 548.0,384.0 C547.3,387.0 543.3,393.7 540.0,398.0 C536.7,402.3 531.0,407.7 528.0,410.0 C525.0,412.3 523.3,413.7 522.0,412.0 C520.7,410.3 517.8,404.0 520.0,400.0Z" fill="#ffffff" stroke="none" stroke-width="0" opacity="0.7"/>
<ellipse cx="512.3" cy="394.4" rx="3.4" ry="4.8" fill="#f4f0f0" stroke="#ffffff" stroke-width="0.8"/><circle cx="512.3" cy="394.4" r="1.3" fill="#222"/>
<g transform="translate(541.0 367.0) rotate(-86.0)"><path d="M0,0 C8.4,-8.9 20.2,-12.5 26.9,-5.4 C29.7,-0.6 25.2,6.5 16.8,6.0 C9.8,5.4 3.4,2.4 0,0Z" fill="url(#gPet)" stroke="#dcdcd2" stroke-width="1.1"/></g><g transform="translate(541.0 367.0) rotate(-40.0)"><path d="M0,0 C8.4,-8.9 20.2,-12.5 26.9,-5.4 C29.7,-0.6 25.2,6.5 16.8,6.0 C9.8,5.4 3.4,2.4 0,0Z" fill="url(#gPetW)" stroke="#dcdcd2" stroke-width="1.1"/></g><g transform="translate(541.0 367.0) rotate(20.0)"><path d="M0,0 C8.4,-8.9 20.2,-12.5 26.9,-5.4 C29.7,-0.6 25.2,6.5 16.8,6.0 C9.8,5.4 3.4,2.4 0,0Z" fill="url(#gPetW)" stroke="#dcdcd2" stroke-width="1.1"/></g><g transform="translate(541.0 367.0) rotate(140.0)"><path d="M0,0 C8.4,-8.9 20.2,-12.5 26.9,-5.4 C29.7,-0.6 25.2,6.5 16.8,6.0 C9.8,5.4 3.4,2.4 0,0Z" fill="url(#gPetW)" stroke="#dcdcd2" stroke-width="1.1"/></g><g transform="translate(541.0 367.0) rotate(-150.0)"><path d="M0,0 C8.4,-8.9 20.2,-12.5 26.9,-5.4 C29.7,-0.6 25.2,6.5 16.8,6.0 C9.8,5.4 3.4,2.4 0,0Z" fill="url(#gPetW)" stroke="#dcdcd2" stroke-width="1.1"/></g>
<path d="M295.0,634.0 L304.0,634.0 L308.5,770.0 L297.8,770.0Z" fill="#e08cb0" stroke="#ffffff" stroke-width="0.9" />
<path d="M299.0,630.0 C300.8,626.3 308.5,631.7 312.0,638.0 C315.5,644.3 318.8,657.7 320.0,668.0 C321.2,678.3 320.2,691.7 319.0,700.0 C317.8,708.3 315.2,719.3 313.0,718.0 C310.8,716.7 308.0,701.7 306.0,692.0 C304.0,682.3 302.2,670.3 301.0,660.0 C299.8,649.7 297.2,633.7 299.0,630.0Z" fill="url(#gLeaf)" stroke="#ffffff" stroke-width="0.9" />
<path d="M322.0,636.0 C323.7,635.2 331.5,643.5 335.0,650.0 C338.5,656.5 342.0,668.0 343.0,675.0 C344.0,682.0 342.8,692.3 341.0,692.0 C339.2,691.7 334.7,679.2 332.0,673.0 C329.3,666.8 326.7,661.2 325.0,655.0 C323.3,648.8 320.3,636.8 322.0,636.0Z" fill="url(#gLeaf)" stroke="#ffffff" stroke-width="0.9" />
<path d="M363.4,535.1 C364.5,535.6 365.3,545.4 366.0,548.6 C366.7,551.8 370.4,564.5 370.2,567.2 C370.0,569.9 364.7,574.0 364.3,575.7 C363.9,577.4 366.9,582.1 366.0,584.1 C365.1,586.1 358.6,594.0 355.8,595.9 C353.0,597.8 340.4,603.0 338.1,602.7 C335.8,602.4 334.4,594.8 333.0,592.6 C331.6,590.4 326.5,583.9 324.6,580.7 C322.8,577.5 314.8,562.7 314.5,560.5 C314.2,558.3 320.0,558.0 321.2,558.8 C322.4,559.6 325.4,568.1 326.3,568.9 C327.2,569.7 329.2,569.6 329.7,567.2 C330.2,564.8 330.6,547.2 331.4,545.3 C332.2,543.4 337.1,547.2 338.1,548.6 C339.1,550.0 340.6,557.9 341.5,558.8 C342.4,559.6 345.9,558.6 346.6,557.1 C347.3,555.6 347.5,544.6 348.2,543.6 C348.9,542.6 352.6,547.0 353.3,547.0 C354.0,547.0 354.0,544.8 355.0,543.6 C356.0,542.4 362.3,534.6 363.4,535.1Z" fill="url(#gLeafD)" stroke="#ffffff" stroke-width="1.0" />
<path d="M340,600 C348,580 356,560 363,537 M345,585 L332,575 M350,572 L338,560 M354,560 L362,552 M348,590 L360,585" stroke="#ffffff" stroke-width="0.8" fill="none"/>
<g transform="translate(288.3 611.1) rotate(-122.0)"><path d="M0,0 C15.6,-15.2 37.4,-21.3 49.9,-9.1 C55.1,-1.0 46.8,11.2 31.2,10.2 C18.2,9.1 6.2,4.1 0,0Z" fill="url(#gPet)" stroke="#dcdcd2" stroke-width="1.1"/></g><g transform="translate(288.3 611.1) rotate(-73.0)"><path d="M0,0 C15.6,-15.2 37.4,-21.3 49.9,-9.1 C55.1,-1.0 46.8,11.2 31.2,10.2 C18.2,9.1 6.2,4.1 0,0Z" fill="url(#gPetW)" stroke="#dcdcd2" stroke-width="1.1"/></g><g transform="translate(288.3 611.1) rotate(-28.0)"><path d="M0,0 C15.6,-15.2 37.4,-21.3 49.9,-9.1 C55.1,-1.0 46.8,11.2 31.2,10.2 C18.2,9.1 6.2,4.1 0,0Z" fill="url(#gPetW)" stroke="#dcdcd2" stroke-width="1.1"/></g><g transform="translate(288.3 611.1) rotate(186.0)"><path d="M0,0 C15.6,-15.2 37.4,-21.3 49.9,-9.1 C55.1,-1.0 46.8,11.2 31.2,10.2 C18.2,9.1 6.2,4.1 0,0Z" fill="url(#gPetW)" stroke="#dcdcd2" stroke-width="1.1"/></g><g transform="translate(288.3 611.1) rotate(118.0)"><path d="M0,0 C15.6,-15.2 37.4,-21.3 49.9,-9.1 C55.1,-1.0 46.8,11.2 31.2,10.2 C18.2,9.1 6.2,4.1 0,0Z" fill="url(#gPet)" stroke="#dcdcd2" stroke-width="1.1"/></g>
<g transform="translate(321.2 623.0) rotate(-50.0)"><path d="M0,0 C9.6,-9.4 23.0,-13.1 30.7,-5.6 C33.9,-0.6 28.8,6.9 19.2,6.3 C11.2,5.6 3.8,2.5 0,0Z" fill="url(#gPetW)" stroke="#dcdcd2" stroke-width="1.1"/></g><g transform="translate(321.2 623.0) rotate(-12.0)"><path d="M0,0 C9.6,-9.4 23.0,-13.1 30.7,-5.6 C33.9,-0.6 28.8,6.9 19.2,6.3 C11.2,5.6 3.8,2.5 0,0Z" fill="url(#gPetW)" stroke="#dcdcd2" stroke-width="1.1"/></g><g transform="translate(321.2 623.0) rotate(45.0)"><path d="M0,0 C9.6,-9.4 23.0,-13.1 30.7,-5.6 C33.9,-0.6 28.8,6.9 19.2,6.3 C11.2,5.6 3.8,2.5 0,0Z" fill="url(#gPetW)" stroke="#dcdcd2" stroke-width="1.1"/></g><g transform="translate(321.2 623.0) rotate(125.0)"><path d="M0,0 C9.6,-9.4 23.0,-13.1 30.7,-5.6 C33.9,-0.6 28.8,6.9 19.2,6.3 C11.2,5.6 3.8,2.5 0,0Z" fill="url(#gPet)" stroke="#dcdcd2" stroke-width="1.1"/></g><g transform="translate(321.2 623.0) rotate(205.0)"><path d="M0,0 C9.6,-9.4 23.0,-13.1 30.7,-5.6 C33.9,-0.6 28.8,6.9 19.2,6.3 C11.2,5.6 3.8,2.5 0,0Z" fill="url(#gPet)" stroke="#dcdcd2" stroke-width="1.1"/></g>
<path d="M331.5,651.8 C333.0,652.6 349.2,666.7 353.0,668.7 C356.8,670.7 365.4,670.9 369.9,671.8 C374.3,672.6 393.3,676.2 397.5,677.2 C401.7,678.2 411.9,681.0 412.0,681.5 C412.1,682.0 403.4,682.5 399.0,682.5 C394.6,682.5 372.7,681.5 368.4,681.0 C364.1,680.5 359.2,680.0 356.1,678.0 C353.0,676.0 340.2,663.6 337.7,661.0 C335.2,658.4 330.0,651.0 331.5,651.8Z" fill="url(#gStL)" stroke="#ffffff" stroke-width="0.9" />
<path d="M341.5,630.3 C342.9,628.4 350.1,626.0 353.0,625.7 C355.9,625.4 359.5,625.8 363.0,628.0 C366.5,630.2 375.7,638.7 379.1,641.9 C382.5,645.1 387.7,649.3 388.3,651.8 C388.9,654.3 385.3,658.8 383.7,661.0 C382.1,663.2 378.6,666.8 376.0,668.0 C373.4,669.2 367.9,670.3 364.5,670.3 C361.1,670.3 352.9,670.3 350.7,668.0 C348.5,665.7 348.8,657.2 347.7,653.4 C346.6,649.6 343.1,642.7 342.3,639.6 C341.5,636.5 340.1,632.2 341.5,630.3Z" fill="url(#gBut)" stroke="#5a90cc" stroke-width="0.8" />
<g fill="#fffbe0" opacity="0.8"><ellipse cx="360" cy="645" rx="2.5" ry="1.2" transform="rotate(30 360 645)"/><ellipse cx="362" cy="652" rx="2.5" ry="1.2" transform="rotate(30 362 652)"/><ellipse cx="356" cy="658" rx="2.5" ry="1.2" transform="rotate(30 356 658)"/><ellipse cx="368" cy="659" rx="2.5" ry="1.2" transform="rotate(30 368 659)"/></g>
<path d="M393.7,651 C400,647 408,646 415.2,648 M392,652 C398,648 402,648 406,650 M388,658 L378,675 M391,658 L397,677" stroke="#7aa0c0" stroke-width="0.9" fill="none"/><ellipse cx="390.6" cy="654.9" rx="4" ry="3.5" fill="#1e4a6e"/>
<path d="M350.0,677.0 C352.0,677.0 357.3,684.5 360.0,690.0 C362.7,695.5 364.3,701.7 366.0,710.0 C367.7,718.3 370.3,731.3 370.0,740.0 C369.7,748.7 366.3,762.0 364.0,762.0 C361.7,762.0 358.0,748.7 356.0,740.0 C354.0,731.3 353.3,718.3 352.0,710.0 C350.7,701.7 348.3,695.5 348.0,690.0 C347.7,684.5 348.0,677.0 350.0,677.0Z" fill="url(#gBlue)" stroke="#ffffff" stroke-width="0.8" />
<path d="M366.0,700.0 C367.0,695.3 374.7,705.3 378.0,712.0 C381.3,718.7 385.3,731.7 386.0,740.0 C386.7,748.3 384.3,762.0 382.0,762.0 C379.7,762.0 374.7,750.3 372.0,740.0 C369.3,729.7 365.0,704.7 366.0,700.0Z" fill="url(#gOr)" stroke="#ffffff" stroke-width="0.8" />
<path d="M380.0,682.0 C381.3,681.3 390.3,685.0 394.0,690.0 C397.7,695.0 402.0,709.3 402.0,712.0 C402.0,714.7 396.7,709.0 394.0,706.0 C391.3,703.0 388.3,698.0 386.0,694.0 C383.7,690.0 378.7,682.7 380.0,682.0Z" fill="url(#gOr)" stroke="#ffffff" stroke-width="0.8" />
<g transform="translate(547.0 556.5) rotate(-95.0)"><path d="M0,0 C4.4,-12.1 16.6,-16.6 21.0,-7.7 C24.3,-1.1 24.3,5.5 19.9,9.9 C15.5,16.6 4.4,12.1 0,0Z" fill="url(#gVio)" stroke="#ffffff" stroke-width="1"/></g><g transform="translate(547.0 556.5) rotate(-25.0)"><path d="M0,0 C4.8,-13.2 18.0,-18.0 22.8,-8.4 C26.4,-1.2 26.4,6.0 21.6,10.8 C16.8,18.0 4.8,13.2 0,0Z" fill="url(#gVio)" stroke="#ffffff" stroke-width="1"/></g><g transform="translate(547.0 556.5) rotate(47.0)"><path d="M0,0 C4.8,-13.2 18.0,-18.0 22.8,-8.4 C26.4,-1.2 26.4,6.0 21.6,10.8 C16.8,18.0 4.8,13.2 0,0Z" fill="url(#gVio)" stroke="#ffffff" stroke-width="1"/></g><g transform="translate(547.0 556.5) rotate(119.0)"><path d="M0,0 C4.8,-13.2 18.0,-18.0 22.8,-8.4 C26.4,-1.2 26.4,6.0 21.6,10.8 C16.8,18.0 4.8,13.2 0,0Z" fill="url(#gVio)" stroke="#ffffff" stroke-width="1"/></g><g transform="translate(547.0 556.5) rotate(191.0)"><path d="M0,0 C4.8,-13.2 18.0,-18.0 22.8,-8.4 C26.4,-1.2 26.4,6.0 21.6,10.8 C16.8,18.0 4.8,13.2 0,0Z" fill="url(#gVio)" stroke="#ffffff" stroke-width="1"/></g><circle cx="547" cy="556.5" r="2.4" fill="#f0e060"/>
<g transform="translate(531.0 628.0) rotate(-70.0)"><path d="M0,0 C9.2,-25.3 34.5,-34.5 43.7,-16.1 C50.6,-2.3 50.6,11.5 41.4,20.7 C32.2,34.5 9.2,25.3 0,0Z" fill="url(#gVio)" stroke="#ffffff" stroke-width="1"/></g><g transform="translate(531.0 628.0) rotate(-5.0)"><path d="M0,0 C8.3,-22.8 31.0,-31.0 39.3,-14.5 C45.5,-2.1 45.5,10.3 37.3,18.6 C29.0,31.0 8.3,22.8 0,0Z" fill="url(#gVio)" stroke="#ffffff" stroke-width="1"/></g><g transform="translate(531.0 628.0) rotate(50.0)"><path d="M0,0 C8.3,-22.8 31.0,-31.0 39.3,-14.5 C45.5,-2.1 45.5,10.3 37.3,18.6 C29.0,31.0 8.3,22.8 0,0Z" fill="url(#gVio)" stroke="#ffffff" stroke-width="1"/></g><g transform="translate(531.0 628.0) rotate(110.0)"><path d="M0,0 C7.8,-21.5 29.3,-29.3 37.1,-13.7 C43.0,-2.0 43.0,9.8 35.2,17.6 C27.4,29.3 7.8,21.5 0,0Z" fill="url(#gVio)" stroke="#ffffff" stroke-width="1"/></g><g transform="translate(531.0 628.0) rotate(190.0)"><path d="M0,0 C9.2,-25.3 34.5,-34.5 43.7,-16.1 C50.6,-2.3 50.6,11.5 41.4,20.7 C32.2,34.5 9.2,25.3 0,0Z" fill="url(#gVio)" stroke="#ffffff" stroke-width="1"/></g><circle cx="531" cy="628" r="4.6" fill="#f0e060"/>
<path d="M445.7,744.6 C447.3,741.6 465.0,728.7 468.7,724.5 C472.4,720.3 479.6,706.0 483.0,703.0 C486.4,700.0 499.9,697.3 503.0,694.4 C506.1,691.5 512.2,676.4 514.5,674.3 C516.8,672.1 523.1,672.9 526.0,672.9 C528.9,672.9 541.2,672.0 543.2,674.3 C545.2,676.6 545.7,690.3 546.0,695.8 C546.3,701.2 542.6,724.9 546.0,728.8 C549.4,732.7 574.7,733.9 580.4,734.5 C586.1,735.1 601.0,733.4 603.4,734.5 C605.8,735.6 606.8,742.6 604.8,746.0 C602.8,749.4 586.0,766.0 583.3,768.9 C580.6,771.8 581.0,773.9 577.6,774.6 C574.2,775.3 552.6,778.7 548.9,776.1 C545.2,773.5 541.4,751.0 540.3,748.9 C539.1,746.8 537.5,750.7 537.4,754.6 C537.3,758.5 541.5,784.2 538.9,787.5 C536.3,790.8 517.9,787.6 511.7,787.5 C505.5,787.4 483.2,789.4 477.3,786.1 C471.4,782.8 456.1,758.8 452.9,754.6 C449.7,750.5 444.1,747.6 445.7,744.6Z" fill="url(#gMonH)" stroke="#ffffff" stroke-width="1.1" />
<path d="M452,752 C470,740 490,728 520,700 M478,786 C486,760 500,735 512,716" stroke="#ffffff" stroke-width="1" fill="none"/>
<path d="M633.3,717.4 C634.5,717.0 648.6,719.4 650.7,720.5 C652.8,721.6 656.3,729.0 658.9,730.7 C661.5,732.4 678.7,740.9 681.4,740.9 C684.1,740.9 690.6,732.8 691.6,730.7 C692.6,728.6 692.7,715.7 693.7,715.4 C694.7,715.1 701.7,725.6 703.9,727.6 C706.1,729.6 718.4,737.1 720.3,738.9 C722.2,740.7 724.9,747.5 726.4,749.1 C727.9,750.7 738.0,755.6 737.7,758.3 C737.4,761.0 725.4,779.9 722.4,781.9 C719.4,783.9 705.1,781.9 701.9,781.9 C698.7,781.9 685.2,783.6 683.5,781.9 C681.8,780.2 682.1,762.9 681.4,761.4 C680.7,759.9 676.0,762.2 675.3,763.5 C674.6,764.8 674.6,776.1 673.2,776.8 C671.8,777.5 661.8,773.0 658.9,771.6 C656.0,770.2 639.6,762.8 638.4,760.4 C637.2,758.0 644.8,745.9 644.6,743.0 C644.4,740.1 637.3,727.7 636.4,725.6 C635.5,723.5 632.1,717.8 633.3,717.4Z" fill="url(#gMonH2)" stroke="#ffffff" stroke-width="1.1" />
<path d="M681,741 C698,750 712,756 737,758 M702,782 C700,770 696,758 690,748 M722,780 C716,770 710,760 704,752" stroke="#ffffff" stroke-width="1" fill="none"/>
<path d="M600.6,747.6 C598.4,748.2 590.1,762.5 585.8,767.9 C581.5,773.3 568.9,787.2 563.7,793.7 C558.5,800.2 546.5,816.3 541.6,823.2 C536.7,830.1 525.6,846.0 521.3,852.7 C517.0,859.4 504.5,879.9 504.7,880.3 C504.9,880.7 517.8,861.8 523.2,856.4 C528.6,851.0 544.6,839.9 550.8,834.3 C557.0,828.7 571.2,814.5 576.6,808.5 C582.0,802.5 593.7,788.1 596.9,782.7 C600.1,777.3 603.9,766.5 604.3,762.4 C604.7,758.3 602.8,747.0 600.6,747.6Z" fill="url(#gLeaf)" stroke="#ffffff" stroke-width="1.0" />
<path d="M627.9,755.0 C629.4,756.1 632.1,770.4 631.9,775.3 C631.7,780.2 629.0,791.8 626.4,797.4 C623.8,803.0 614.1,817.4 609.8,823.2 C605.5,829.0 593.8,843.3 589.5,847.2 C585.2,851.1 572.5,857.5 572.9,856.4 C573.3,855.3 589.1,842.7 593.2,838.0 C597.3,833.3 605.4,821.4 608.0,815.8 C610.6,810.2 614.0,795.8 615.3,790.0 C616.6,784.2 617.5,770.1 619.0,766.0 C620.5,761.9 626.4,753.9 627.9,755.0Z" fill="url(#gLeaf)" stroke="#ffffff" stroke-width="1.0" />
<path d="M598.7,801.1 C597.4,802.0 592.1,817.6 589.5,823.2 C586.9,828.8 579.6,843.2 576.6,849.0 C573.6,854.8 563.5,872.6 563.7,873.0 C563.9,873.4 575.1,857.2 578.5,852.7 C581.9,848.2 590.6,838.6 593.2,834.3 C595.8,830.0 600.0,819.7 600.6,815.8 C601.2,811.9 600.0,800.2 598.7,801.1Z" fill="url(#gLeaf)" stroke="#ffffff" stroke-width="1.0" />
<path d="M604.0,734.0 C604.5,729.6 608.7,729.6 609.0,734.0 C609.3,738.4 609.1,793.6 609.0,800.0 C608.9,806.4 607.5,828.0 607.0,830.0 C606.5,832.0 602.4,832.0 602.0,830.0 C601.6,828.0 600.9,806.4 601.0,800.0 C601.1,793.6 603.5,738.4 604.0,734.0Z" fill="#bcd058" stroke="#ffffff" stroke-width="0.9" />
<path d="M601.0,818.0 C599.5,820.2 593.1,836.6 592.6,840.0 C592.1,843.4 595.8,848.9 596.4,851.5 C597.0,854.1 598.9,862.9 599.0,865.6 C599.1,868.3 596.8,875.8 597.7,878.4 C598.6,881.0 605.7,888.6 608.0,891.2 C610.3,893.8 618.2,901.4 620.7,904.0 C623.2,906.6 630.8,914.0 633.5,916.8 C636.2,919.6 647.6,932.7 647.6,932.1 C647.6,931.5 636.2,914.5 633.5,910.4 C630.8,906.3 623.0,895.0 620.7,891.2 C618.4,887.4 611.9,875.5 610.5,872.0 C609.1,868.5 607.3,859.8 606.7,856.6 C606.1,853.4 604.0,843.9 604.1,840.0 C604.2,836.1 608.3,820.2 608.0,818.0 C607.7,815.8 602.5,815.8 601.0,818.0Z" fill="url(#gStB)" stroke="#ffffff" stroke-width="0.9" />
<path d="M592.6,852.8 C593.1,852.6 597.2,860.0 597.7,862.0 C598.2,864.0 598.2,873.1 597.7,873.3 C597.2,873.5 593.1,866.0 592.6,864.0 C592.1,862.0 592.1,853.0 592.6,852.8Z" fill="url(#gBlue)" stroke="#ffffff" stroke-width="0.8" />
<path d="M505.6,925.7 C505.6,924.7 526.1,915.1 531.2,912.9 C536.3,910.7 551.9,905.9 556.8,904.0 C561.7,902.1 576.2,896.5 579.8,893.7 C583.4,890.9 591.1,877.8 592.6,875.8 C594.1,873.8 595.4,871.8 595.1,873.3 C594.8,874.8 592.5,887.4 590.0,891.2 C587.5,895.0 572.9,908.4 569.6,911.6 C566.3,914.8 558.7,921.7 556.8,923.2 C554.9,924.7 553.0,927.0 550.4,927.0 C547.8,927.0 535.7,923.3 531.2,923.2 C526.7,923.1 505.6,926.7 505.6,925.7Z" fill="url(#gBlue)" stroke="#ffffff" stroke-width="0.9" />
<path d="M492.8,943.6 C494.1,942.2 514.8,929.8 518.4,928.3 C522.0,926.8 528.2,927.5 528.6,928.3 C529.0,929.1 523.9,934.9 522.2,936.0 C520.5,937.1 513.7,939.2 512.0,939.8 C510.3,940.4 507.5,942.0 505.6,942.4 C503.7,942.8 491.5,945.0 492.8,943.6Z" fill="url(#gBlue)" stroke="#ffffff" stroke-width="0.8" />
<path d="M522.2,964.0 C520.4,962.2 529.0,949.5 531.2,946.2 C533.4,942.9 542.2,930.9 544.0,930.8 C545.8,930.7 548.6,941.6 549.1,944.9 C549.6,948.2 551.8,962.1 549.1,964.0 C546.4,965.9 524.0,965.8 522.2,964.0Z" fill="url(#gOr)" stroke="#ffffff" stroke-width="0.8" />
<path d="M587.5,955.1 C587.0,953.2 593.4,934.0 595.1,929.6 C596.8,925.2 603.1,911.9 604.1,911.6 C605.1,911.3 605.8,923.3 605.4,927.0 C605.0,930.7 602.1,946.0 600.3,948.8 C598.5,951.6 588.0,957.0 587.5,955.1Z" fill="url(#gOr)" stroke="#ffffff" stroke-width="0.8" />
<path d="M572.1,952.6 C571.5,950.2 580.1,927.8 582.4,923.2 C584.7,918.6 592.9,909.8 595.1,906.5 C597.3,903.2 603.1,889.9 604.1,889.9 C605.1,889.9 605.9,902.5 605.4,906.5 C604.9,910.5 600.7,925.5 599.0,929.6 C597.3,933.7 591.5,945.2 588.8,947.5 C586.1,949.8 572.7,955.0 572.1,952.6Z" fill="url(#gOr)" stroke="#ffffff" stroke-width="0.8" />
<path d="M607.9,895.0 C608.7,895.4 613.0,907.2 614.3,910.4 C615.6,913.6 619.8,923.2 620.7,927.0 C621.6,930.8 623.8,947.5 623.3,948.8 C622.8,950.1 617.1,942.8 615.6,939.8 C614.1,936.8 608.8,922.6 607.9,919.3 C607.0,916.0 606.7,908.9 606.7,906.5 C606.7,904.1 607.1,894.6 607.9,895.0Z" fill="url(#gBlue)" stroke="#ffffff" stroke-width="0.8" />
<g transform="translate(654.0 605.0) rotate(-84.0)"><path d="M0,0 C17.4,-15.5 41.8,-21.7 55.7,-9.3 C61.5,-1.0 52.2,11.4 34.8,10.4 C20.3,9.3 7.0,4.1 0,0Z" fill="url(#gPet)" stroke="#dcdcd2" stroke-width="1.1"/></g><g transform="translate(654.0 605.0) rotate(-36.0)"><path d="M0,0 C16.8,-15.0 40.3,-21.0 53.8,-9.0 C59.4,-1.0 50.4,11.0 33.6,10.0 C19.6,9.0 6.7,4.0 0,0Z" fill="url(#gPetW)" stroke="#dcdcd2" stroke-width="1.1"/></g><g transform="translate(654.0 605.0) rotate(12.0)"><path d="M0,0 C17.4,-15.5 41.8,-21.7 55.7,-9.3 C61.5,-1.0 52.2,11.4 34.8,10.4 C20.3,9.3 7.0,4.1 0,0Z" fill="url(#gPetW)" stroke="#dcdcd2" stroke-width="1.1"/></g><g transform="translate(654.0 605.0) rotate(150.0)"><path d="M0,0 C12.0,-10.7 28.8,-15.0 38.4,-6.4 C42.4,-0.7 36.0,7.9 24.0,7.1 C14.0,6.4 4.8,2.9 0,0Z" fill="url(#gPetW)" stroke="#dcdcd2" stroke-width="1.1"/></g><g transform="translate(654.0 605.0) rotate(-135.0)"><path d="M0,0 C13.5,-12.0 32.4,-16.9 43.2,-7.2 C47.7,-0.8 40.5,8.8 27.0,8.0 C15.7,7.2 5.4,3.2 0,0Z" fill="url(#gPetW)" stroke="#dcdcd2" stroke-width="1.1"/></g>
<path d="M596.5,571.4 C600.2,570.8 610.2,582.1 617.3,584.6 C624.4,587.1 638.7,586.4 643.8,588.4 C648.9,590.4 650.8,593.1 651.4,597.9 C652.0,602.7 651.0,613.5 647.6,620.6 C644.2,627.7 633.8,638.4 628.7,645.2 C623.6,652.0 617.8,662.4 613.5,666.1 C609.2,669.8 602.8,673.0 600.2,669.9 C597.7,666.8 597.3,653.2 596.5,645.2 C595.7,637.2 595.2,625.3 594.6,616.8 C594.0,608.3 592.4,595.2 592.7,588.4 C593.0,581.6 592.8,572.0 596.5,571.4Z" fill="url(#gHib2)" stroke="#ffffff" stroke-width="1.1" />
<path d="M638.1,622.5 C643.8,619.1 658.8,618.7 666.5,618.7 C674.2,618.7 685.0,619.9 689.3,622.5 C693.6,625.1 695.0,631.0 695.0,635.8 C695.0,640.6 691.6,649.6 689.3,654.7 C687.0,659.8 684.3,667.0 679.8,669.9 C675.3,672.8 666.7,673.1 659.0,673.7 C651.3,674.3 634.4,675.4 628.7,673.7 C623.0,672.0 621.1,667.1 621.1,662.3 C621.1,657.5 626.2,647.5 628.7,641.5 C631.2,635.5 632.4,625.9 638.1,622.5Z" fill="url(#gHib2)" stroke="#ffffff" stroke-width="1.1" />
<path d="M530.2,614.9 C531.6,611.2 547.2,604.2 552.9,601.7 C558.6,599.2 563.5,597.6 568.0,597.9 C572.5,598.2 579.2,600.2 583.2,603.6 C587.2,607.0 592.3,614.4 594.6,620.6 C596.9,626.8 598.1,638.4 598.4,645.2 C598.7,652.0 598.2,662.1 596.5,666.1 C594.8,670.1 590.7,671.8 587.0,671.8 C583.3,671.8 576.1,669.8 571.8,666.1 C567.5,662.4 562.9,653.1 558.6,647.1 C554.3,641.1 547.7,631.1 543.4,626.3 C539.1,621.5 528.8,618.6 530.2,614.9Z" fill="url(#gHib2)" stroke="#ffffff" stroke-width="1.1" />
<path d="M545.3,662.3 C548.4,656.6 558.0,653.0 564.3,654.7 C570.6,656.4 580.8,670.0 587.0,673.7 C593.2,677.4 599.6,676.5 605.9,679.3 C612.2,682.1 624.4,687.8 628.7,692.6 C633.0,697.4 635.4,705.8 634.3,711.5 C633.2,717.2 626.2,726.8 621.1,730.5 C616.0,734.2 607.6,736.2 600.2,736.2 C592.8,736.2 579.8,731.9 571.8,730.5 C563.8,729.1 551.5,732.4 547.2,726.7 C542.9,721.0 543.7,702.3 543.4,692.6 C543.1,682.9 542.2,668.0 545.3,662.3Z" fill="url(#gHib2)" stroke="#ffffff" stroke-width="1.1" />
<path d="M617.3,673.7 C620.1,669.7 639.1,666.1 647.6,666.1 C656.1,666.1 668.4,669.7 674.1,673.7 C679.8,677.7 682.9,686.9 685.5,692.6 C688.1,698.3 690.6,705.0 691.2,711.5 C691.8,718.0 692.4,732.8 689.3,736.2 C686.2,739.6 676.6,735.7 670.3,734.3 C664.0,732.9 653.0,730.1 647.6,726.7 C642.2,723.3 637.1,716.6 634.3,711.5 C631.5,706.4 631.2,698.3 628.7,692.6 C626.2,686.9 614.5,677.7 617.3,673.7Z" fill="url(#gHib2)" stroke="#ffffff" stroke-width="1.1" />
<path d="M606,668 L650,618 M604,664 L624,640 M612,672 L660,650 M598,672 Q570,690 566,708 M640,676 Q668,690 672,704" stroke="#f4e6b0" stroke-width="1" fill="none"/><g fill="#f2e080"><circle cx="650" cy="618" r="1.8"/><circle cx="644" cy="626" r="1.8"/><circle cx="638" cy="634" r="1.8"/><circle cx="632" cy="642" r="1.6"/><circle cx="626" cy="646" r="1.6"/></g>
<path d="M317.5,776.0 C318.3,774.4 328.0,769.8 329.0,770.3 C330.0,770.8 328.1,779.4 327.3,781.0 C326.5,782.6 321.8,786.4 320.8,785.9 C319.8,785.4 316.7,777.6 317.5,776.0Z" fill="#e8a8bc" stroke="#ffffff" stroke-width="1.0" />
<path d="M171.5,830.5 C174.0,827.7 193.0,822.5 199.9,820.0 C206.8,817.5 215.7,814.2 223.0,811.7 C230.3,809.2 245.4,804.3 254.4,801.2 C263.4,798.1 285.5,790.3 290.5,788.3 C295.5,786.3 291.2,788.5 292.1,785.9 C293.0,783.3 296.0,771.6 297.5,769.0 C299.0,766.4 301.5,766.5 303.0,766.5 C304.5,766.5 306.8,767.3 308.5,769.0 C310.2,770.7 314.3,776.6 315.9,779.3 C317.5,782.0 319.3,786.7 320.8,789.1 C322.3,791.5 325.3,795.2 327.3,797.3 C329.3,799.4 332.5,803.6 335.5,804.7 C338.5,805.8 345.0,806.1 350.0,805.5 C355.0,804.9 367.3,801.0 372.7,800.0 C378.1,799.0 386.4,798.0 390.8,798.0 C395.2,798.0 401.4,798.6 405.5,800.0 C409.6,801.4 418.7,804.9 421.8,808.2 C424.9,811.5 427.5,820.2 428.4,824.6 C429.3,829.0 427.5,835.4 428.4,840.9 C429.3,846.4 433.6,859.0 434.9,865.5 C436.2,872.0 437.3,884.5 438.2,890.0 C439.1,895.5 441.5,901.4 441.5,906.4 C441.5,911.4 440.4,923.1 438.2,927.7 C436.0,932.3 429.0,938.4 425.1,940.8 C421.2,943.2 413.6,945.5 408.8,945.7 C404.0,945.9 393.5,944.6 389.1,942.4 C384.7,940.2 378.4,933.4 376.0,929.3 C373.6,925.2 370.9,916.3 371.1,911.3 C371.3,906.3 374.5,896.7 377.6,891.7 C380.7,886.7 389.6,878.3 394.0,873.7 C398.4,869.1 408.2,861.7 410.4,857.3 C412.6,852.9 411.1,845.0 410.4,840.9 C409.7,836.8 407.7,829.0 405.5,826.2 C403.3,823.4 397.3,820.3 394.0,819.6 C390.7,818.9 383.7,819.6 380.9,821.3 C378.1,823.0 374.2,826.8 372.7,832.7 C371.2,838.6 371.2,858.5 369.5,865.5 C367.8,872.5 363.5,881.2 359.6,885.1 C355.7,889.0 344.2,893.6 340.0,894.9 C335.8,896.2 335.1,894.6 327.9,895.0 C320.7,895.4 295.7,898.7 285.9,897.7 C276.1,896.7 262.8,890.8 254.4,887.2 C246.0,883.6 230.5,875.4 223.0,870.4 C215.5,865.4 203.4,853.3 197.8,849.4 C192.2,845.5 184.5,843.5 181.0,841.0 C177.5,838.5 169.0,833.3 171.5,830.5Z" fill="url(#gBody2)" stroke="#ffffff" stroke-width="1.3" />
<path d="M303.0,774.0 C303.2,773.6 306.7,776.2 308.0,778.0 C309.3,779.8 315.5,790.6 316.0,792.0 C316.5,793.4 314.0,793.0 313.0,792.0 C312.0,791.0 307.0,783.8 306.0,782.0 C305.0,780.2 302.8,774.4 303.0,774.0Z" fill="#ffffff" stroke="none" stroke-width="0" />
<path d="M174.0,834.0 C177.3,831.3 194.0,831.7 205.0,832.0 C216.0,832.3 227.5,834.3 240.0,836.0 C252.5,837.7 269.2,839.3 280.0,842.0 C290.8,844.7 301.7,846.5 305.0,852.0 C308.3,857.5 305.8,869.0 300.0,875.0 C294.2,881.0 281.7,887.5 270.0,888.0 C258.3,888.5 241.7,882.7 230.0,878.0 C218.3,873.3 207.5,865.0 200.0,860.0 C192.5,855.0 189.3,852.3 185.0,848.0 C180.7,843.7 170.7,836.7 174.0,834.0Z" fill="url(#gWing2)" stroke="none" stroke-width="0" />
<path d="M199.9,821.8 C201.7,819.8 210.0,816.8 215.0,815.0 C220.0,813.2 236.6,808.3 243.0,806.0 C249.4,803.7 264.5,797.1 270.0,795.0 C275.5,792.9 287.9,788.5 290.5,788.4 C293.1,788.3 294.4,791.9 292.0,794.0 C289.6,796.1 275.7,803.4 270.0,806.0 C264.3,808.6 248.9,813.7 243.1,816.0 C237.3,818.3 225.0,824.1 220.0,826.0 C215.0,827.9 202.2,832.5 199.9,832.0 C197.6,831.5 198.1,823.8 199.9,821.8Z" fill="#e79ab2" stroke="#ffffff" stroke-width="1.0" />
<path d="M243.1,834.4 C243.1,833.8 264.5,825.9 270.0,824.0 C275.5,822.1 284.9,818.9 290.5,818.5 C296.1,818.1 313.3,819.7 318.4,821.0 C323.5,822.3 330.7,827.0 334.0,830.0 C337.3,833.0 347.2,846.8 346.3,847.0 C345.4,847.2 331.4,834.5 326.0,832.0 C320.6,829.5 306.5,826.4 300.0,826.0 C293.5,825.6 276.6,828.0 270.0,829.0 C263.4,830.0 243.1,835.0 243.1,834.4Z" fill="#ffffff" stroke="none" stroke-width="0" />
<path d="M428.4,840.9 C430.7,844.0 433.6,859.0 434.9,865.5 C436.2,872.0 437.3,884.5 438.2,890.0 C439.1,895.5 441.5,901.4 441.5,906.4 C441.5,911.4 440.4,923.1 438.2,927.7 C436.0,932.3 429.0,938.4 425.1,940.8 C421.2,943.2 413.6,945.5 408.8,945.7 C404.0,945.9 393.5,944.6 389.1,942.4 C384.7,940.2 378.4,933.4 376.0,929.3 C373.6,925.2 370.9,916.3 371.1,911.3 C371.3,906.3 374.5,896.7 377.6,891.7 C380.7,886.7 389.6,878.3 394.0,873.7 C398.4,869.1 407.2,861.5 410.4,857.3 C413.6,853.1 415.6,844.2 418.0,842.0 C420.4,839.8 426.1,837.8 428.4,840.9Z" fill="#e48890" stroke="none" stroke-width="0" opacity="0.5"/>
<path d="M392,910 C388,898 396,886 410,880" stroke="#ffffff" stroke-width="1.6" fill="none"/>
<path d="M411.8,836.8 C412.2,835.5 420.4,841.2 422.3,843.1 C424.2,845.0 429.6,852.8 430.7,855.7 C431.8,858.6 432.8,869.1 432.8,872.5 C432.8,875.9 431.5,887.4 430.7,889.3 C429.9,891.2 425.2,893.1 424.4,891.4 C423.6,889.7 422.9,876.1 422.3,872.5 C421.7,868.9 419.2,859.3 418.1,855.7 C417.1,852.1 411.4,838.1 411.8,836.8Z" fill="url(#gBeak2)" stroke="#ffffff" stroke-width="1.0" />
<ellipse cx="422.3" cy="905" rx="3.6" ry="4.8" fill="#f4f0f0" stroke="#ffffff" stroke-width="0.8"/><circle cx="422.3" cy="905" r="1.3" fill="#222"/>
<path d="M175.2,898.9 C177.0,898.7 189.0,911.8 190.0,913.7 C191.0,915.6 187.0,921.4 187.5,921.9 C188.0,922.4 195.3,918.8 196.5,919.4 C197.7,920.0 201.6,927.4 201.4,929.2 C201.2,931.0 193.5,941.9 194.1,941.5 C194.7,941.1 206.8,924.5 208.8,924.3 C210.8,924.1 218.2,936.5 217.8,939.1 C217.4,941.7 205.2,953.3 203.9,955.4 C202.6,957.5 206.4,963.3 202.2,964.0 C198.0,964.7 157.3,965.8 153.1,964.0 C148.9,962.2 152.3,944.4 152.3,942.3 C152.3,940.1 151.4,937.6 153.1,938.2 C154.8,938.8 172.1,950.6 172.8,949.7 C173.6,948.8 162.0,929.5 162.1,927.6 C162.2,925.7 173.8,927.8 174.4,926.8 C175.0,925.8 168.6,918.4 168.7,916.1 C168.8,913.8 173.4,899.1 175.2,898.9Z" fill="url(#gMonB)" stroke="#ffffff" stroke-width="1.0" />
<path d="M175,900 L178,935 L181,964 M178,935 C188,930 196,924 200,920 M179,948 C170,944 160,942 154,940" stroke="#ffffff" stroke-width="0.9" fill="none"/>
<path d="M226.8,947.2 C227.9,946.8 230.6,957.3 230.9,958.7 C231.2,960.1 231.2,963.6 230.1,964.0 C229.0,964.4 218.1,965.4 217.8,964.0 C217.5,962.6 225.7,947.6 226.8,947.2Z" fill="url(#gMonB)" stroke="#ffffff" stroke-width="0.8" /></g>
<g id="S" fill="#ffffff"><rect x="-600" y="307" width="2400" height="25.5"/><rect x="-600" y="413" width="2400" height="25.5"/><rect x="-600" y="528.6" width="2400" height="25.6"/><rect x="-600" y="621" width="2400" height="25.2"/><rect x="-600" y="714.8" width="2400" height="25.4"/><rect x="-600" y="812.3" width="2400" height="24.7"/><rect x="-600" y="905" width="2400" height="25.2"/></g>
<filter id="sat" x="300" y="250" width="320" height="300" filterUnits="userSpaceOnUse"><feColorMatrix type="saturate" values="1.3"/></filter>
</defs>
<rect x="121" y="334" width="1018" height="629" fill="#ffffff"/>
<g clip-path="url(#cv)">
  <rect x="121" y="334" width="1008" height="629" fill="#f5e0e3"/>
  <use href="#S"/>
  <use href="#P" x="-529"/><use href="#P"/><use href="#P" x="529"/>
</g>
<g clip-path="url(#inner)">
  <rect x="770" y="160" width="660" height="660" fill="#232323"/>
  <rect x="700" y="358.5" width="522" height="460" fill="#ffffff"/>
  <g transform="matrix(1.6 0 0 1.6 247.8 -57)">
    <g clip-path="url(#insclip)">
      <rect x="300" y="259.4" width="302" height="400" fill="#ffe3e6"/>
      <use href="#S"/>
      <g filter="url(#sat)"><use href="#P"/></g>
    </g>
  </g>
</g>
<circle cx="1097.8" cy="488" r="342.9" fill="none" stroke="#ffffff" stroke-width="50.80000000000001"/>
</svg>
</body></html>
